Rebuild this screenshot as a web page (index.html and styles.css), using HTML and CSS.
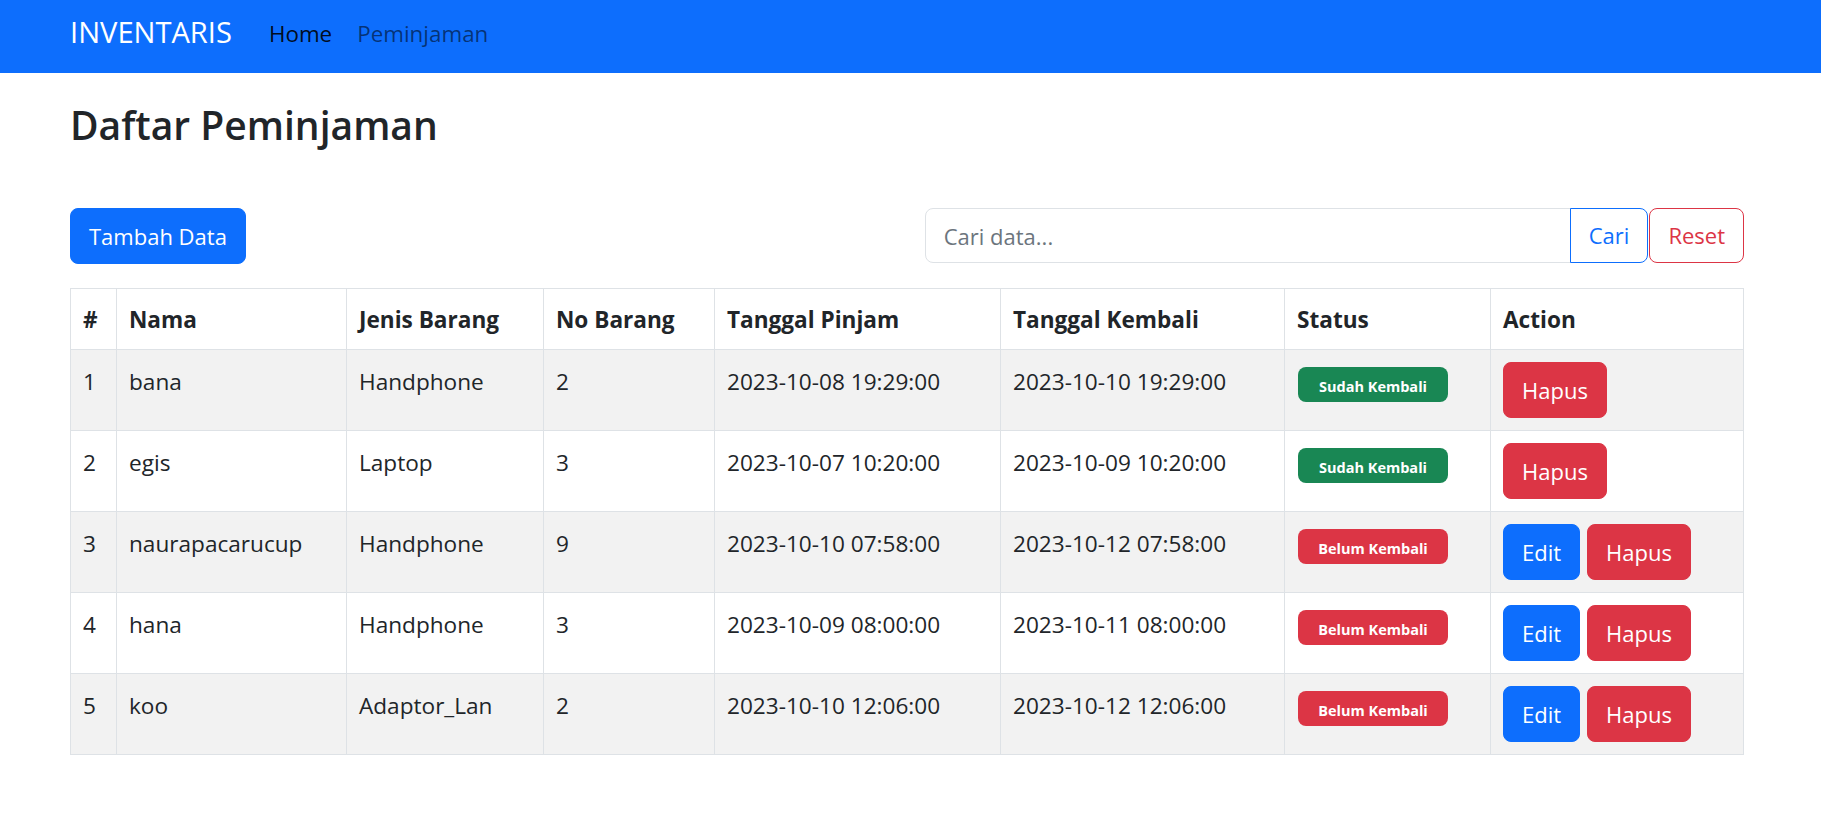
FILE: index.html
```html
<!DOCTYPE html>
<html lang="id">
<head>
<meta charset="utf-8">
<title>Inventaris - Daftar Peminjaman</title>
<link rel="stylesheet" href="styles.css">
</head>
<body>
<nav class="navbar">
  <div class="nav-inner">
    <a class="brand" href="#">INVENTARIS</a>
    <a class="nav-link active" href="#">Home</a>
    <a class="nav-link" href="#">Peminjaman</a>
  </div>
</nav>
<main class="page">
  <h2 class="title">Daftar Peminjaman</h2>
  <div class="toolbar">
    <button class="btn btn-primary">Tambah Data</button>
    <form class="search">
      <input class="search-input" type="text" placeholder="Cari data...">
      <button class="btn btn-outline-primary btn-join" type="button">Cari</button>
      <button class="btn btn-outline-danger btn-reset" type="button">Reset</button>
    </form>
  </div>
  <table class="table">
    <colgroup>
      <col class="c-no"><col class="c-nama"><col class="c-jenis"><col class="c-nobar">
      <col class="c-pinjam"><col class="c-kembali"><col class="c-status"><col class="c-action">
    </colgroup>
    <thead>
      <tr><th>#</th><th>Nama</th><th>Jenis Barang</th><th>No Barang</th><th>Tanggal Pinjam</th><th>Tanggal Kembali</th><th>Status</th><th>Action</th></tr>
    </thead>
    <tbody>
      <tr class="striped">
        <td>1</td><td>bana</td><td>Handphone</td><td>2</td><td>2023-10-08 19:29:00</td><td>2023-10-10 19:29:00</td>
        <td><span class="badge badge-success">Sudah Kembali</span></td>
        <td><div class="actions"><button class="btn btn-danger">Hapus</button></div></td>
      </tr>
      <tr>
        <td>2</td><td>egis</td><td>Laptop</td><td>3</td><td>2023-10-07 10:20:00</td><td>2023-10-09 10:20:00</td>
        <td><span class="badge badge-success">Sudah Kembali</span></td>
        <td><div class="actions"><button class="btn btn-danger">Hapus</button></div></td>
      </tr>
      <tr class="striped">
        <td>3</td><td>naurapacarucup</td><td>Handphone</td><td>9</td><td>2023-10-10 07:58:00</td><td>2023-10-12 07:58:00</td>
        <td><span class="badge badge-danger">Belum Kembali</span></td>
        <td><div class="actions"><button class="btn btn-primary">Edit</button><button class="btn btn-danger">Hapus</button></div></td>
      </tr>
      <tr>
        <td>4</td><td>hana</td><td>Handphone</td><td>3</td><td>2023-10-09 08:00:00</td><td>2023-10-11 08:00:00</td>
        <td><span class="badge badge-danger">Belum Kembali</span></td>
        <td><div class="actions"><button class="btn btn-primary">Edit</button><button class="btn btn-danger">Hapus</button></div></td>
      </tr>
      <tr class="striped">
        <td>5</td><td>koo</td><td>Adaptor_Lan</td><td>2</td><td>2023-10-10 12:06:00</td><td>2023-10-12 12:06:00</td>
        <td><span class="badge badge-danger">Belum Kembali</span></td>
        <td><div class="actions"><button class="btn btn-primary">Edit</button><button class="btn btn-danger">Hapus</button></div></td>
      </tr>
    </tbody>
  </table>
</main>
</body>
</html>
```

FILE: styles.css
```css
* { box-sizing: border-box; }

body {
  margin: 0;
  font-family: "Open Sans", "Noto Sans", sans-serif;
  font-size: 22px;
  line-height: 35px;
  color: #212529;
  background: #fff;
}

.navbar {
  background: #0d6efd;
  height: 73px;
}

.nav-inner {
  display: flex;
  align-items: flex-start;
  padding-left: 70px;
}

.brand {
  font-size: 29.1px;
  line-height: 43px;
  margin-top: 11px;
  margin-right: 37px;
  color: #fff;
  text-decoration: none;
}

.nav-link {
  font-size: 22.4px;
  margin-top: 15.5px;
  margin-right: 25px;
  color: rgba(0, 0, 0, 0.55);
  text-decoration: none;
}

.nav-link.active {
  color: rgba(0, 0, 0, 0.9);
}

.page {
  padding: 0 77px 0 70px;
}

.title {
  margin: 28px 0 0;
  font-size: 39px;
  line-height: 47px;
  font-weight: 600;
}

.toolbar {
  display: flex;
  justify-content: space-between;
  align-items: flex-start;
  margin-top: 60px;
  height: 56px;
}

.btn {
  font-family: inherit;
  font-size: 22px;
  line-height: 35px;
  padding: 9.5px 18px;
  border: 1px solid transparent;
  border-radius: 8px;
  background: #fff;
  cursor: pointer;
}

.btn-primary { background: #0d6efd; border-color: #0d6efd; color: #fff; }
.btn-danger { background: #dc3545; border-color: #dc3545; color: #fff; }
.btn-outline-primary { color: #0d6efd; border-color: #0d6efd; }
.btn-outline-danger { color: #dc3545; border-color: #dc3545; }

.search {
  display: flex;
  margin: 0;
}

.search-input {
  width: 646px;
  height: 55px;
  padding: 0 18px;
  font-family: inherit;
  font-size: 22px;
  color: #212529;
  border: 1px solid #dee2e6;
  border-radius: 8px 0 0 8px;
  outline: none;
}

.search-input::placeholder { color: #6c757d; }

.search .btn {
  padding-top: 9px;
  padding-bottom: 9px;
}

.btn-join {
  margin-left: -1px;
  border-radius: 0 8px 8px 0;
}

.btn-reset {
  margin-left: 1px;
}

.table {
  margin-top: 24px;
  width: 1674px;
  border-collapse: collapse;
  table-layout: fixed;
  font-size: 22.6px;
}

.c-no { width: 46px; }
.c-nama { width: 230px; }
.c-jenis { width: 197px; }
.c-nobar { width: 171px; }
.c-pinjam { width: 286px; }
.c-kembali { width: 284px; }
.c-status { width: 206px; }
.c-action { width: 253px; }

.table th,
.table td {
  border: 1px solid #dee2e6;
  text-align: left;
  vertical-align: top;
  padding: 12px;
}

.table th {
  padding-top: 12.5px;
  padding-bottom: 12.5px;
  font-weight: 700;
  line-height: 35px;
}

.table td {
  line-height: 40px;
  height: 81px;
}

.table tr.striped td {
  background: #f2f2f2;
}

.badge {
  display: block;
  width: 150px;
  height: 35px;
  margin-top: 5px;
  margin-left: 1px;
  padding-top: 4px;
  border-radius: 8px;
  color: #fff;
  font-size: 14.5px;
  line-height: 31px;
  font-weight: 700;
  text-align: center;
}

.badge-success { background: #198754; }
.badge-danger { background: #dc3545; }

.actions {
  display: flex;
  gap: 7px;
}

.actions .btn {
  height: 56px;
}
```
